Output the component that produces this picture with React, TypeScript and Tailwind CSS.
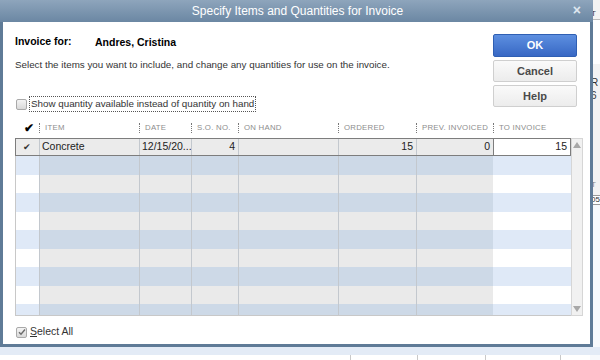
import React from "react";

const cols = [
  { key: "chk", w: 24 },
  { key: "item", w: 100, label: "ITEM" },
  { key: "date", w: 52, label: "DATE" },
  { key: "so", w: 47, label: "S.O. NO." },
  { key: "onhand", w: 100, label: "ON HAND" },
  { key: "ordered", w: 78, label: "ORDERED" },
  { key: "prev", w: 77, label: "PREV. INVOICED" },
  { key: "toinv", w: 78, label: "TO INVOICE" },
];

function Checkbox({ checked }: { checked?: boolean }) {
  return (
    <div className="w-[11px] h-[11px] border border-[#a9a9a9] rounded-[2px] bg-gradient-to-b from-[#f4f4f4] to-[#d9d9d9] flex items-center justify-center">
      {checked && (
        <svg width="8" height="8" viewBox="0 0 8 8">
          <path d="M1 4.2 L3 6.2 L7 1.5" fill="none" stroke="#6b6b6b" strokeWidth="1.4" />
        </svg>
      )}
    </div>
  );
}

function Btn({ children, primary, h }: { children: React.ReactNode; primary?: boolean; h: string }) {
  return (
    <div
      className={
        primary
          ? `${h} rounded-[2px] border border-[#2f5fb3] bg-gradient-to-b from-[#5d8fe0] to-[#3868c4] text-white font-bold text-[11px] flex items-center justify-center`
          : `${h} rounded-[2px] border border-[#cfcfcf] bg-gradient-to-b from-[#fafafa] to-[#ececec] text-[#4a4a4a] font-bold text-[11px] flex items-center justify-center`
      }
    >
      {children}
    </div>
  );
}

function StripeRow({ i }: { i: number }) {
  const blue = i % 2 === 0;
  return (
    <div className="flex h-[18.5px] shrink-0">
      {cols.map((c, ci) => {
        const outer = ci === 0 || ci === cols.length - 1;
        const bg = outer
          ? blue
            ? "bg-[#dfe9f7]"
            : "bg-white"
          : blue
          ? "bg-[#cdd9e7]"
          : "bg-[#eaeaea]";
        const line =
          ci === 0 ? "border-l border-[#c8c8c8]" : ci <= 6 ? "border-l border-[#c3c8ce]" : "";
        return <div key={c.key} style={{ width: c.w }} className={`${bg} ${line} shrink-0`} />;
      })}
    </div>
  );
}

export default function App() {
  return (
    <div className="relative w-[600px] h-[360px] overflow-hidden bg-white font-['Liberation_Sans',Arial,sans-serif]">
      {/* app behind the dialog */}
      <div className="absolute inset-0 flex flex-col">
        <div className="flex-1 flex">
          <div className="flex-1" />
          <div className="w-[10px] bg-[#f3f3f3] text-[10px] text-[#333] leading-none">
            <div className="h-[20px] border-b border-[#bbb] pt-[10px] pl-[1px] text-[8px]">T</div>
            <div className="h-[44px] bg-white" />
            <div className="pt-[14px] pl-[1px]">R</div>
            <div className="pt-[3px] pl-[1px]">6</div>
            <div className="h-[80px]" />
            <div className="pl-[1px] text-[8px] text-[#888]">T</div>
            <div className="mt-[6px] border-y border-[#999] bg-white text-[8px] pl-[1px]">05</div>
            <div className="h-full bg-[#f7f9fc]" />
          </div>
        </div>
        <div className="h-[8px] bg-[#e3ebf6]" />
        <div className="h-[5px] flex">
          <div className="w-[350px]" />
          <div className="w-[67px] border-l border-[#c9c9c9]" />
          <div className="w-[68px] border-l border-[#c9c9c9]" />
          <div className="w-[75px] border-l border-[#c9c9c9]" />
          <div className="flex-1 border-l border-[#c9c9c9]" />
        </div>
      </div>

      {/* dialog window */}
      <div className="absolute left-0 top-0 w-[593px] h-[347px] flex flex-col bg-[#5f7b97] px-[3px] pb-[3px]">
        <div className="h-[22px] shrink-0 -mx-[3px] bg-gradient-to-b from-[#8ea5bc] to-[#6b87a3] flex items-center relative">
          <div className="flex-1 text-center text-white text-[12px] pl-[2px]">Specify Items and Quantities for Invoice</div>
          <div className="absolute right-[12px] top-[3px] text-[#dfe7ef] text-[14px] font-bold leading-none">×</div>
        </div>

        <div className="flex-1 bg-white flex flex-col pl-[12px] pr-[7px] text-[#222]">
          {/* top area */}
          <div className="flex h-[96px] shrink-0">
            <div className="flex-1 flex flex-col">
              <div className="flex items-center mt-[14px] h-[12px] text-[10.5px] font-bold text-black">
                <span className="w-[80px]">Invoice for:</span>
                <span className="mt-[2px]">Andres, Cristina</span>
              </div>
              <div className="mt-[11px] h-[12px] text-[9.8px] text-[#333] flex items-center">
                Select the items you want to include, and change any quantities for use on the invoice.
              </div>
              <div className="mt-[25px] flex items-center h-[16px]">
                <div className="ml-[1px]">
                  <Checkbox />
                </div>
                <div className="ml-[2px] px-[1px] h-[16px] border border-dotted border-[#555] text-[9.8px] text-[#333] flex items-center">
                  Show quantity available instead of quantity on hand
                </div>
              </div>
            </div>
            <div className="w-[84px] mt-[12px] mr-[6px] flex flex-col gap-[3px]">
              <Btn primary h="h-[23px]">OK</Btn>
              <Btn h="h-[22px]">Cancel</Btn>
              <Btn h="h-[22px]">Help</Btn>
            </div>
          </div>

          {/* table header */}
          <div className="flex h-[19px] shrink-0 items-center">
            {cols.map((c, ci) => (
              <div key={c.key} style={{ width: c.w }} className="shrink-0 flex items-center h-[12px]">
                {ci === 0 ? (
                  <span className="ml-[9px] text-[12px] font-bold text-black leading-none">✔</span>
                ) : (
                  <>
                    <div className="h-[10px] border-l border-dotted border-[#777]" />
                    <span className="ml-[5px] text-[7.8px] tracking-[0.25px] text-[#8d8d8d] whitespace-nowrap">{c.label}</span>
                  </>
                )}
              </div>
            ))}
          </div>

          {/* table body */}
          <div className="flex h-[178px] shrink-0 mt-[1px] w-[568px]">
            <div className="w-[556px] flex flex-col overflow-hidden border-b border-[#c8c8c8]">
              <div className="flex h-[18px] shrink-0 outline outline-1 -outline-offset-1 outline-[#7d7d7d] bg-[#ebebeb] text-[10.5px] text-[#222]">
                <div className="w-[24px] shrink-0 flex items-center justify-center text-[9px] text-[#333] pt-[1px]">✔</div>
                <div className="w-[100px] shrink-0 border-l border-[#c3c8ce] pl-[2px] flex items-center">Concrete</div>
                <div className="w-[52px] shrink-0 border-l border-[#c3c8ce] pl-[2px] flex items-center">12/15/20...</div>
                <div className="w-[47px] shrink-0 border-l border-[#c3c8ce] pr-[3px] flex items-center justify-end">4</div>
                <div className="w-[100px] shrink-0 border-l border-[#c3c8ce]" />
                <div className="w-[78px] shrink-0 border-l border-[#c3c8ce] pr-[3px] flex items-center justify-end">15</div>
                <div className="w-[77px] shrink-0 border-l border-[#c3c8ce] pr-[3px] flex items-center justify-end">0</div>
                <div className="flex-1 bg-white border border-[#7d7d7d] pr-[3px] flex items-center justify-end">15</div>
              </div>
              {Array.from({ length: 10 }).map((_, i) => (
                <StripeRow key={i} i={i} />
              ))}
            </div>
            <div className="w-[12px] bg-[#f1f1f1] border border-[#d6d6d6] flex flex-col justify-between items-center py-[3px]">
              <svg width="8" height="6" viewBox="0 0 8 6">
                <path d="M0 6 L4 0 L8 6 Z" fill="#a8a8a8" />
              </svg>
              <svg width="8" height="6" viewBox="0 0 8 6">
                <path d="M0 0 L4 6 L8 0 Z" fill="#a8a8a8" />
              </svg>
            </div>
          </div>

          {/* select all */}
          <div className="flex items-center mt-[9px] h-[14px]">
            <div className="ml-[1px]">
              <Checkbox checked />
            </div>
            <span className="ml-[3px] text-[10.5px] text-[#333]">
              <span className="underline">S</span>elect All
            </span>
          </div>
        </div>
      </div>
    </div>
  );
}
